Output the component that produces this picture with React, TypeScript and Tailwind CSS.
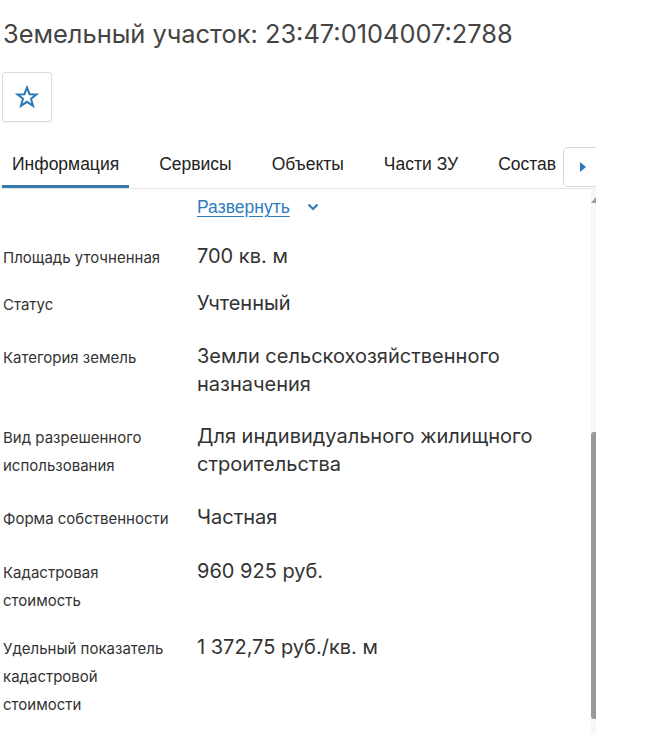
import React from "react";

const rows: { label: string[]; value: string[]; mb: string }[] = [
  { label: ["Площадь уточненная"], value: ["700 кв. м"], mb: "mb-[19px]" },
  { label: ["Статус"], value: ["Учтенный"], mb: "mb-[25px]" },
  { label: ["Категория земель"], value: ["Земли сельскохозяйственного", "назначения"], mb: "mb-[26px]" },
  { label: ["Вид разрешенного", "использования"], value: ["Для индивидуального жилищного", "строительства"], mb: "mb-[25px]" },
  { label: ["Форма собственности"], value: ["Частная"], mb: "mb-[26px]" },
  { label: ["Кадастровая", "стоимость"], value: ["960 925 руб."], mb: "mb-[20px]" },
  { label: ["Удельный показатель", "кадастровой", "стоимости"], value: ["1 372,75 руб./кв. м"], mb: "mb-0" },
];

const tabs = ["Информация", "Сервисы", "Объекты", "Части ЗУ", "Состав"];

export default function App() {
  return (
    <div className="w-[646px] h-[734px] bg-white overflow-hidden" style={{ fontFamily: "Inter, 'Noto Sans', sans-serif" }}>
      <div className="w-[596px] h-[734px] overflow-hidden flex flex-col">
        <h1 className="pl-[3px] pt-[20px] h-[72px] text-[25.4px] leading-[28px] text-[#444] whitespace-nowrap">
          Земельный участок: 23:47:0104007:2788
        </h1>
        <div className="pl-[2px]">
          <button className="w-[50px] h-[50px] border border-[#dcdcdc] rounded-[3px] flex items-center justify-center shadow-[0_1px_2px_rgba(0,0,0,0.06)]">
            <svg width="24" height="24" viewBox="0 0 24 24" fill="none" stroke="#2a78b8" strokeWidth="2" strokeLinejoin="miter">
              <polygon points="12,2.5 14.6,9.2 21.5,9.4 16,13.8 18,20.8 12,16.8 6,20.8 8,13.8 2.5,9.4 9.4,9.2" />
            </svg>
          </button>
        </div>
        <div className="mt-[25px] flex items-stretch border-b border-[#e6e6e6] h-[42px] pl-[2px] relative" style={{ fontFamily: "'Liberation Sans', Arial, sans-serif" }}>
          <div className="flex gap-[20px] flex-1">
            {tabs.map((t, i) => (
              <div
                key={t}
                className={
                  "px-[10px] text-[17.5px] text-[#222] flex items-center " +
                  (i === 0 ? "border-b-[3px] border-[#3579ad] pb-[3px]" : "pb-[6px]")
                }
              >
                {t}
              </div>
            ))}
          </div>
          <div className="absolute left-[563px] top-0 w-[40px] h-[40px] border border-[#d8d8d8] rounded-[5px] bg-white flex items-center pl-[16px]">
            <svg width="6" height="10" viewBox="0 0 6 10"><polygon points="0,0 6,5 0,10" fill="#2a78b8" /></svg>
          </div>
        </div>
        <div className="flex flex-1 min-h-0">
          <div className="flex-1">
            <div className="pl-[197px] h-[36px] flex items-center gap-[17px]" style={{ fontFamily: "'Liberation Sans', Arial, sans-serif" }}>
              <span className="text-[17.5px] text-[#2f7dc1] underline underline-offset-[3px]">Развернуть</span>
              <svg width="12" height="8" viewBox="0 0 12 8" fill="none" stroke="#2f7dc1" strokeWidth="2.2"><polyline points="1.5,1.5 6,6 10.5,1.5" /></svg>
            </div>
            <div className="flex flex-col mt-[19px]">
              {rows.map((r) => (
                <div key={r.label[0]} className={"flex " + r.mb}>
                  <div className="w-[197px] shrink-0 pl-[3px] text-[15px] leading-[28px] text-[#333]">
                    {r.label.map((l) => (
                      <div key={l}>{l}</div>
                    ))}
                  </div>
                  <div className="text-[20px] leading-[28px] text-[#333] -mt-[2px] whitespace-nowrap">
                    {r.value.map((v) => (
                      <div key={v}>{v}</div>
                    ))}
                  </div>
                </div>
              ))}
            </div>
          </div>
          <div className="w-[5px] flex flex-col bg-[#f7f7f7] pt-[8px]">
            <div className="w-0 h-0 border-l-[5px] border-l-transparent border-b-[6px] border-b-[#999]" />
            <div className="mt-[229px] h-[287px] w-[5px] bg-[#999] rounded-tl-[3px] rounded-bl-[3px]" />
          </div>
        </div>
      </div>
    </div>
  );
}
